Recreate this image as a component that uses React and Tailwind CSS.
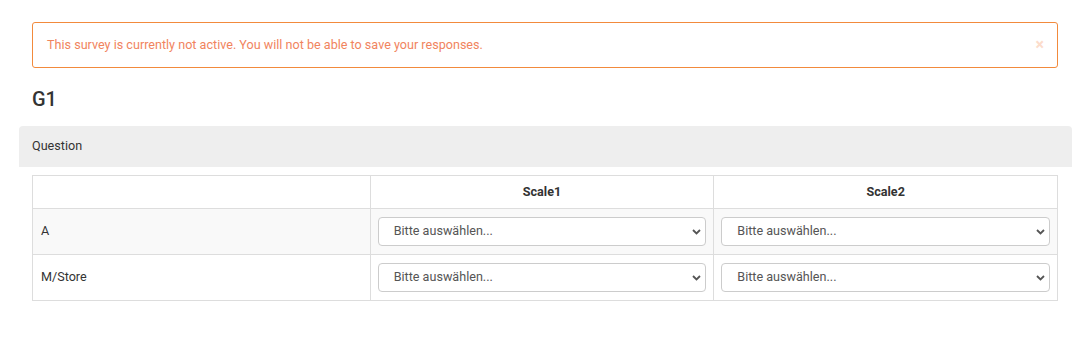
import React from 'react';

const rows = ['A', 'M/Store'];
const scales = ['Scale1', 'Scale2'];

function Select() {
  return (
    <div className="relative">
      <select defaultValue="" className="block w-full h-[29px] appearance-none bg-white border border-[#cccccc] rounded-[4px] pl-[15px] pr-8 text-[12.6px] text-[#555555] leading-none outline-none">
        <option value="">Bitte auswählen...</option>
      </select>
      <svg className="absolute right-[5px] top-[12px] w-[9px] h-[6px] pointer-events-none" viewBox="0 0 9 6" fill="none">
        <path d="M1 1l3.5 3.5 3.5-3.5" stroke="#555555" strokeWidth="1.8" />
      </svg>
    </div>
  );
}

export default function App() {
  return (
    <div className="min-h-[364px] bg-white pt-[22px] font-['Roboto','Liberation_Sans',sans-serif] text-[#333333]">
      <div className="ml-[32px] w-[1026px] h-[46px] flex items-center justify-between border border-[#f28a3c] rounded-[3px] pl-[14px] pr-[13px]">
        <span className="text-[12.6px] text-[#f1845e]">This survey is currently not active. You will not be able to save your responses.</span>
        <span className="text-[16px] font-bold text-[#fcdccb] leading-none">×</span>
      </div>

      <h3 className="ml-[32px] mt-[20px] h-[38px] text-[20px] font-medium leading-[22px] text-[#333333]">G1</h3>

      <div className="ml-[19px] w-[1053px] h-[41px] flex items-center bg-[#eeeeee] rounded-t-[4px] pl-[13px] text-[12.6px] text-[#333333]">
        Question
      </div>

      <table className="ml-[32px] mt-[8px] w-[1026px] border-collapse text-[12.6px] text-[#333333]">
        <thead>
          <tr className="h-[33px]">
            <th className="w-[338px] border border-[#dddddd]"></th>
            {scales.map(s => (
              <th key={s} className="w-[344px] border border-[#dddddd] font-bold text-center">{s}</th>
            ))}
          </tr>
        </thead>
        <tbody>
          {rows.map((r, i) => (
            <tr key={r} className={i % 2 === 0 ? 'h-[46px] bg-[#f9f9f9]' : 'h-[46px] bg-white'}>
              <td className="border border-[#dddddd] px-[8px] text-left font-normal">{r}</td>
              {scales.map(s => (
                <td key={s} className="border border-[#dddddd] px-[7px] py-[7px]">
                  <Select />
                </td>
              ))}
            </tr>
          ))}
        </tbody>
      </table>
    </div>
  );
}
